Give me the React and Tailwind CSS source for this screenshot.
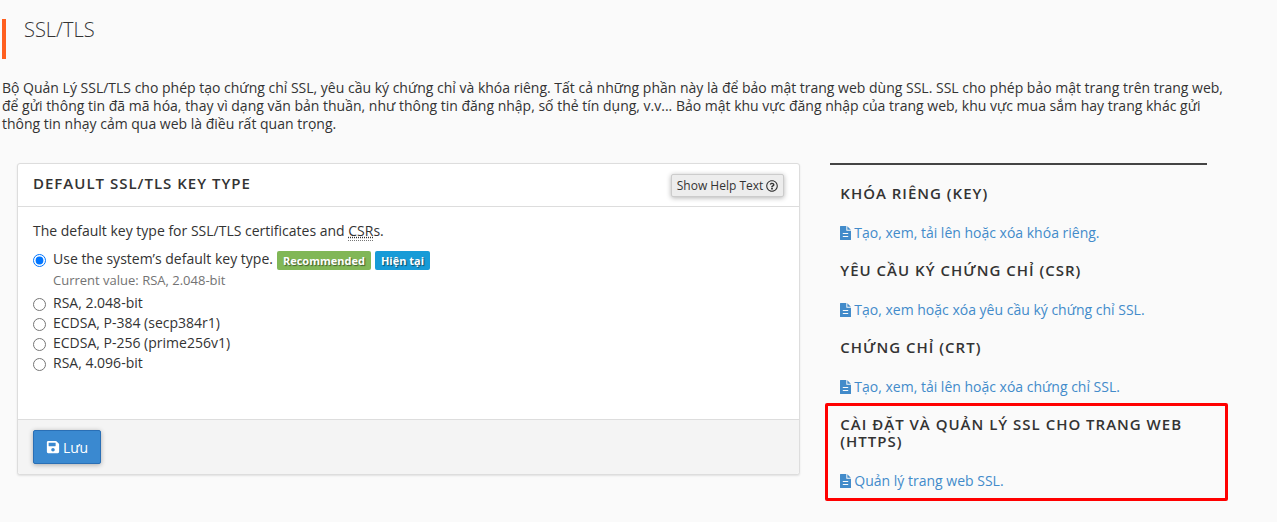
import React from "react";
import { FaRegQuestionCircle, FaSave } from "react-icons/fa";

const keyTypes = [
  { id: "rsa-2048", label: "RSA, 2.048-bit" },
  { id: "ecdsa-p384", label: "ECDSA, P-384 (secp384r1)" },
  { id: "ecdsa-p256", label: "ECDSA, P-256 (prime256v1)" },
  { id: "rsa-4096", label: "RSA, 4.096-bit" },
];

const sections = [
  { title: "Khóa riêng (KEY)", link: "Tạo, xem, tải lên hoặc xóa khóa riêng." },
  { title: "Yêu cầu ký chứng chỉ (CSR)", link: "Tạo, xem hoặc xóa yêu cầu ký chứng chỉ SSL." },
  { title: "Chứng chỉ (CRT)", link: "Tạo, xem, tải lên hoặc xóa chứng chỉ SSL." },
  {
    title: "Cài đặt và quản lý SSL cho trang web (HTTPS)",
    link: "Quản lý trang web SSL.",
    highlighted: true,
  },
];

function FileIcon() {
  return (
    <svg viewBox="0 0 11 14" className="h-3.5 w-[11px] shrink-0" fill="currentColor" aria-hidden="true">
      <path
        fillRule="evenodd"
        d="M0.5 0H6.3V4.3Q6.3 4.8 6.8 4.8H11V13.5Q11 14 10.5 14H0.5Q0 14 0 13.5V0.5Q0 0 0.5 0ZM2.8 7V8H8.2V7ZM2.8 10V11H8.2V10Z"
      />
      <path d="M7.3 0.2L10.8 3.8H7.3Z" />
    </svg>
  );
}

function Badge({ className, children }) {
  return (
    <span
      className={`mt-px rounded-[2px] px-1.5 text-[11px] leading-[19px] font-bold text-white [text-shadow:1px_1px_1px_rgba(0,0,0,0.5)] ${className}`}
    >
      {children}
    </span>
  );
}

function KeyTypePanel() {
  return (
    <form
      onSubmit={(e) => e.preventDefault()}
      className="rounded-[3px] border border-[#ddd] bg-white shadow-[0_1px_2px_rgba(0,0,0,0.1)] lg:col-span-8"
    >
      <div className="flex items-start justify-between border-b border-[#ddd] px-[15px] pt-2.5 pb-[9px]">
        <h2 id="keytype-title" className="text-[15px] leading-[18px] font-semibold tracking-[1px] uppercase">
          Default SSL/TLS Key Type
        </h2>
        <button
          type="button"
          className="flex h-[23px] items-center gap-[3px] rounded-[2px] border border-[#ccc] bg-[#ededed] px-[5px] text-[12px] shadow-[0_1px_5px_rgba(0,0,0,0.3)]"
        >
          Show Help Text
          <FaRegQuestionCircle size={12} />
        </button>
      </div>

      <fieldset aria-labelledby="keytype-title" className="px-[15px] pt-[15px] pb-[46px]">
        <p className="mb-2.5 leading-[18px]">
          The default key type for SSL/TLS certificates and{" "}
          <abbr
            title="Certificate Signing Request"
            className="border-b border-dotted border-[#777] underline decoration-dotted"
          >
            CSR
          </abbr>
          s.
        </p>
        <div className="flex items-start gap-[7px]">
          <input id="system" type="radio" name="keytype" defaultChecked className="mt-1 size-[13px]" />
          <div>
            <div className="flex flex-wrap items-start gap-x-1 leading-[18px]">
              <label htmlFor="system">Use the system’s default key type.</label>
              <Badge className="bg-[#81b757]">Recommended</Badge>
              <Badge className="bg-[#179bd7]">Hiện tại</Badge>
            </div>
            <p className="mt-px mb-1 text-[13px] leading-[18px] text-[#737373]">Current value: RSA, 2.048-bit</p>
          </div>
        </div>
        {keyTypes.map((k) => (
          <div key={k.id} className="flex items-start gap-[7px] leading-5">
            <input id={k.id} type="radio" name="keytype" className="mt-[5px] size-[13px]" />
            <label htmlFor={k.id}>{k.label}</label>
          </div>
        ))}
      </fieldset>

      <div className="rounded-b-[3px] border-t border-[#ddd] bg-[#f4f4f4] px-[15px] py-2.5">
        <button
          type="submit"
          className="flex h-[34px] items-center gap-[3px] rounded-[2px] border border-[#2a6fb5] bg-[#3a89d0] px-3 text-white shadow-[0_1px_5px_rgba(0,0,0,0.3)]"
        >
          <FaSave size={14} />
          Lưu
        </button>
      </div>
    </form>
  );
}

export default function App() {
  return (
    <main className="min-h-screen bg-[#fafafa] pt-[19px] pr-10 pb-5 pl-0.5 font-['Open_Sans','Noto_Sans',sans-serif] text-[14px] text-[#333]">
      <h1 className="h-10 border-l-4 border-[#ff5f1f] pl-[18px] text-[20px] leading-[22px] font-light">SSL/TLS</h1>
      <p className="mt-5 leading-[18px]">
        Bộ Quản Lý SSL/TLS cho phép tạo chứng chỉ SSL, yêu cầu ký chứng chỉ và khóa riêng. Tất cả những phần này là để
        bảo mật trang web dùng SSL. SSL cho phép bảo mật trang trên trang web, để gửi thông tin đã mã hóa, thay vì dạng
        văn bản thuần, như thông tin đăng nhập, số thẻ tín dụng, v.v... Bảo mật khu vực đăng nhập của trang web, khu vực
        mua sắm hay trang khác gửi thông tin nhạy cảm qua web là điều rất quan trọng.
      </p>

      <div className="mt-[30px] grid items-start gap-[30px] pr-[30px] pl-[15px] lg:grid-cols-12">
        <KeyTypePanel />
        <aside className="flex flex-col gap-5 border-t-2 border-[#444] px-2.5 pt-5 lg:col-span-4">
          {sections.map((s) => (
            <section key={s.title} className="relative">
              <h3 className="mb-[22px] text-[15px] leading-[17px] font-semibold tracking-[1px] uppercase">
                {s.title}
              </h3>
              <a href="#" className="flex items-center gap-[3px] leading-[18px] text-[#428bca]">
                <FileIcon />
                {s.link}
              </a>
              {s.highlighted && (
                <div className="pointer-events-none absolute -top-[13px] -right-[31px] -bottom-[11px] -left-[15px] rounded-[2px] border-3 border-[#ff0000]" />
              )}
            </section>
          ))}
        </aside>
      </div>
    </main>
  );
}
